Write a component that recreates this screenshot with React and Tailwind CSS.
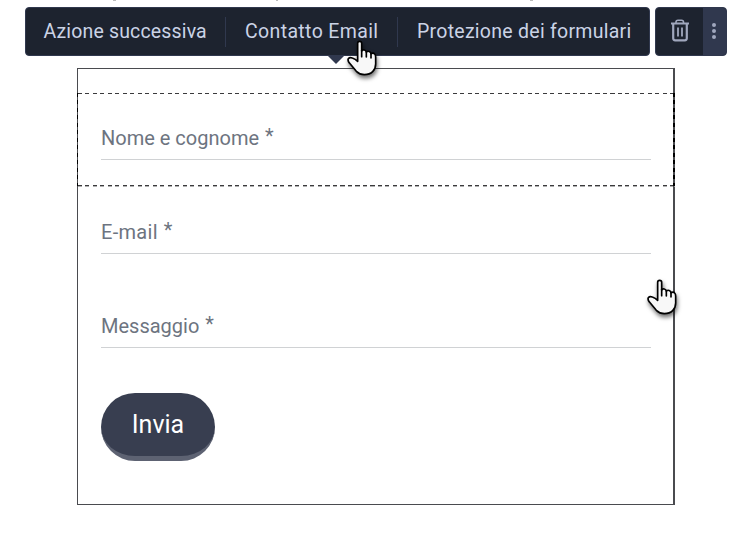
import React from 'react';

const tabs = [
  { label: 'Azione successiva', size: 'w-[199px] pl-[17.5px] tracking-[0.16px]' },
  { label: 'Contatto Email', size: 'w-[172px] pl-[19px] tracking-[0.36px]' },
  { label: 'Protezione dei formulari', size: 'w-[252px] pl-[19px] tracking-[0.27px]' },
];

const HandCursor = ({ className }) => (
  <svg
    className={`absolute w-[30px] h-[36px] overflow-visible drop-shadow-[1px_3px_2px_rgba(0,0,0,0.55)] ${className}`}
    viewBox="0 0 90 108"
  >
    <path
      d="M32 60V10Q32 4 38 4Q44 4 44 10V33Q47 28 52 30Q57 31 58 36Q63 32 68 35Q72 37 72 41Q79 37 83 42Q86 45 86 51V72Q86 86 77 95Q68 104 52 104Q38 104 28 94L8 70Q1 62 4 56Q8 51 16 54Q25 57 32 64Z"
      fill="#f8f8f8"
      stroke="#000000"
      strokeWidth="5"
      strokeLinejoin="round"
    />
    <path d="M44 31V50M58 36V51M72 41V54" fill="none" stroke="#000000" strokeWidth="5" strokeLinecap="round" />
  </svg>
);

const TrashIcon = () => (
  <svg className="w-[20px] h-[24px]" viewBox="0 0 20 24" fill="none" stroke="#a0a7bd">
    <path d="M1 4.5H19" strokeWidth="2" />
    <path d="M6 4V3Q6 1.2 8 1.2H11.5Q13.5 1.2 13.5 3V4" strokeWidth="1.6" />
    <path d="M3.2 5V19.3Q3.2 21.3 5.2 21.3H14.8Q16.8 21.3 16.8 19.3V5" strokeWidth="2.2" />
    <path d="M8 8.5V17.5M12 8.5V17.5" strokeWidth="1.8" />
  </svg>
);

const Toolbar = () => (
  <div className="flex gap-[5px] pl-[25px] h-[49px]">
    <div className="relative flex items-center w-[625px] h-[49px] bg-[#1d232f] border border-[#30384e] rounded-[4px]">
      {tabs.map((tab, i) => (
        <div
          key={tab.label}
          className={`${tab.size} h-[30px] flex items-center ${i > 0 ? 'border-l border-[#30384e]' : ''}`}
        >
          <span className="text-[19.5px] leading-[30px] whitespace-nowrap text-[#cbd3e6]">{tab.label}</span>
        </div>
      ))}
      <svg className="absolute left-[301px] top-[47px] w-[18px] h-[10px]" viewBox="0 0 18 10">
        <path d="M0 0H18L9 9Z" fill="#30384e" />
      </svg>
    </div>
    <div className="flex w-[72px] h-[49px] bg-[#1d232f] border border-[#30384e] rounded-[4px] overflow-hidden">
      <div className="w-[47px] flex items-center justify-center pl-[1px] pb-[1px]">
        <TrashIcon />
      </div>
      <div className="flex-1 flex flex-col items-center justify-center gap-[2px] pr-[1px] pb-[1px] bg-[#30384e]">
        <span className="w-[4px] h-[4px] rounded-full bg-[#a0a7bd]" />
        <span className="w-[4px] h-[4px] rounded-full bg-[#a0a7bd]" />
        <span className="w-[4px] h-[4px] rounded-full bg-[#a0a7bd]" />
      </div>
    </div>
  </div>
);

const Field = ({ label, spacing = '' }) => (
  <div className="ml-[23px] mr-[22px] h-[37px] border-b border-[#d0d2d4] flex gap-[6px] text-[20px] leading-[30px] text-[#6d7480] whitespace-nowrap">
    <span className={spacing}>{label}</span>
    <span className="-mt-[2px]">*</span>
  </div>
);

const App = () => {
  return (
    <div className="relative w-[753px] h-[544px] bg-[#ffffff] overflow-hidden font-['Roboto',sans-serif]">
      {/* tails of the text line hidden above the toolbar */}
      <div className="h-[7px] flex">
        <span className="ml-[113px] w-[3px] h-px bg-[#bbbbbb]" />
        <span className="ml-[160px] w-[2px] h-px bg-[#bbbbbb]" />
        <span className="ml-[252px] w-[3px] h-px bg-[#bbbbbb]" />
      </div>

      <Toolbar />

      <div className="ml-[77px] mt-[12px] w-[598px] h-[437px] border border-r-2 border-[#4a4b4f] flex flex-col">
        <div className="relative mt-[24px] h-[94px] pt-[30px]">
          <div className="absolute top-0 left-0 -right-[2px] h-px bg-[repeating-linear-gradient(90deg,#3a3a3c_0_4px,#ffffff_4px_7.5px)]" />
          <div className="absolute top-[92px] left-0 -right-[2px] h-px bg-[repeating-linear-gradient(90deg,#3a3a3c_0_4px,#ffffff_4px_7.5px)]" />
          <div className="absolute top-[93px] left-0 -right-[2px] h-px opacity-40 bg-[repeating-linear-gradient(90deg,#3a3a3c_0_4px,#ffffff_4px_7.5px)]" />
          <div className="absolute top-0 -left-px w-px h-[93px] bg-[repeating-linear-gradient(180deg,#000000_0_4px,#4a4b4f_4px_7.5px)]" />
          <div className="absolute top-0 -right-[2px] w-[2px] h-[93px] bg-[repeating-linear-gradient(180deg,#000000_0_4px,#4a4b4f_4px_7.5px)]" />
          <Field label="Nome e cognome" />
        </div>
        <div className="h-[94px] pt-[30px]">
          <Field label="E-mail" spacing="tracking-[0.3px]" />
        </div>
        <div className="h-[94px] pt-[30px]">
          <Field label="Messaggio" />
        </div>
        <button className="ml-[23px] mt-[18px] w-[114px] h-[68px] rounded-[34px] bg-[#383e50] border-b-[5px] border-[#5d6272] text-[25px] leading-[30px] text-[#ffffff]">
          Invia
        </button>
      </div>

      <HandCursor className="left-[347px] top-[40px]" />
      <HandCursor className="left-[647px] top-[279px]" />
    </div>
  );
};

export default App;
